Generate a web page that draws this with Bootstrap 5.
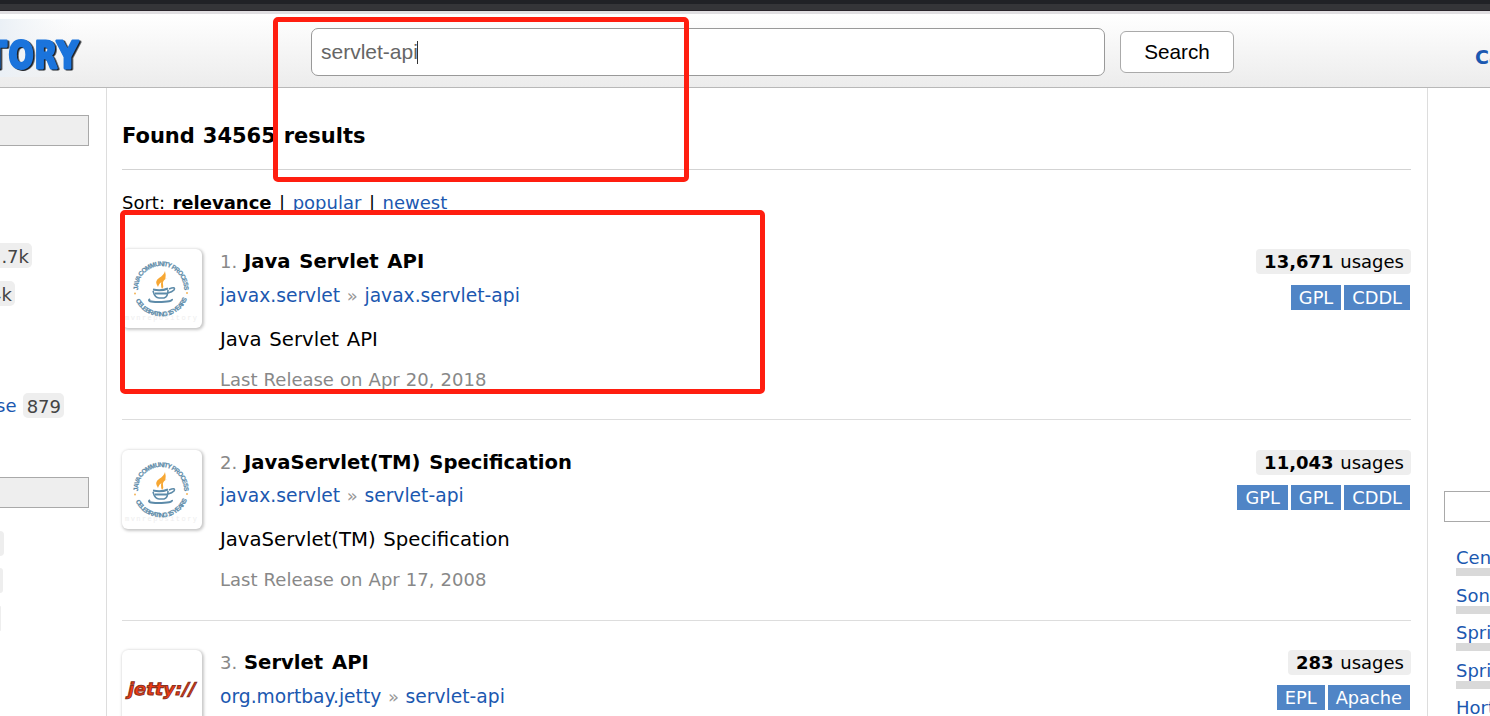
<!DOCTYPE html>
<html lang="en">
<head>
<meta charset="utf-8">
<meta name="viewport" content="width=device-width, initial-scale=1">
<title>servlet-api - search results</title>
<link href="https://cdn.jsdelivr.net/npm/bootstrap@5.3.0/dist/css/bootstrap.min.css" rel="stylesheet">
<style>
body{font-family:Verdana,"DejaVu Sans",sans-serif;font-size:18px;line-height:24px;color:#000;background:#fff;height:716px;overflow:hidden;position:relative}
a{color:#1b58b0;text-decoration:none}
.window-edge{height:14px;background:linear-gradient(#202226 0 4px,#343538 4px 10px,#29242a 10px 11px,#e0dee1 11px 14px)}
.site-header{height:74px;background:linear-gradient(#fff,#ececec);border-bottom:1px solid #b8b8b8}
.logo{width:311px;height:73px;flex:none}
.logo text{filter:drop-shadow(2px 1.5px .6px #1c1f24)}
.query{width:794px;height:48px;margin-top:14px;border:1px solid #999;border-radius:7px;padding:0 9px;background:#fff;font:21px/46px "Liberation Sans",Arial,sans-serif;color:#666;flex:none}
.caret{width:1px;height:23px;background:#333;margin-left:-1px}
.go{width:114px;height:42px;margin:17px 0 0 15px;border:1px solid #aaa;border-radius:6px;padding:0;background:#fff;font:20.7px/40px "Liberation Sans",Arial,sans-serif;color:#000;flex:none}
.cat{margin:31px 0 0 241px;font-weight:700;font-size:19px}
.page-cols{height:628px;overflow:hidden}
.side-l{width:107px;border-right:1px solid #ddd;flex:none;overflow:hidden}
.side-m{width:1321px;padding:0 16px 0 15px;border-right:1px solid #ddd;flex:none}
.side-r{width:62px;flex:none;overflow:hidden;white-space:nowrap}
.bar-box{width:89px;height:31px;background:#eee;border:1px solid #a9a9a9;border-left:0}
.pill{height:25px;line-height:27px;background:#eee;border-radius:5px;color:#444;padding:0 3px;display:block;direction:rtl;overflow:hidden;white-space:nowrap}
.pill-l{border-radius:0 5px 5px 0;padding-left:0}
.pill-empty{padding:0}
h1{font-size:21px;font-weight:700;line-height:26px;margin:0;padding-top:35px;height:81px;word-spacing:.6px}
.results-rule{border-top:1px solid #d3d3d3;height:51px;padding-top:21px;word-spacing:1.8px}
.hit{height:201px;padding-top:30px;border-bottom:1px solid #ddd}
.hit-first{height:200px;padding-top:29px}
.hit-third{padding-top:29px}
.thumb{width:80px;height:79px;border-radius:6px;box-shadow:1px 1px 3px 1px rgba(0,0,0,.22);background:#fff;flex:none}
.hit-body{margin-left:18px;white-space:nowrap}
.hit-title{font-size:19.6px;font-weight:700;line-height:26px;word-spacing:2px}
.num{color:#888;font-weight:400;font-size:18px;word-spacing:0;margin-right:-2px}
.coord{font-size:18.7px;line-height:26px;margin-top:7px;word-spacing:.7px}
.hit-first .coord,.hit-third .coord{margin-top:8px}
.coord span{color:#999;font-size:18px}
.desc{font-size:19.7px;line-height:26px;margin-top:18px;word-spacing:1.5px}
.rel{color:#888;line-height:24px;margin-top:15px;word-spacing:.4px}
.usage{height:25px;line-height:26px;background:#eee;border-radius:4px;padding:0 7px 0 8px;word-spacing:1px}
.lics{gap:3px;margin:10px 1px 0 0}
.lic{height:25px;line-height:26px;background:#5085c6;color:#fff;padding:0 8px;font-size:17.8px}
.meter{height:8px;background:#d9d9d9;margin-left:12px}
.repo{height:29.5px;line-height:24px;padding:7.5px 0 0 12px}
.repo-top{height:23px;line-height:26px;padding-top:0}
.callout-box{position:absolute;border:5px solid #ff1e10;border-radius:5px}
</style>
<script src="https://cdn.jsdelivr.net/npm/bootstrap@5.3.0/dist/js/bootstrap.bundle.min.js"></script>
</head>
<body>
<div class="window-edge"></div>
<header class="site-header d-flex overflow-hidden">
  <svg class="logo" viewBox="0 0 311 73">
    <defs><linearGradient id="lg"><stop offset="0" stop-color="#eaf0f6"/><stop offset="1" stop-color="#f4f6f8" stop-opacity="0"/></linearGradient></defs>
    <rect y="5" width="75" height="58" fill="url(#lg)"/>
    <text transform="translate(0 53.500) scale(.8 1)" x="-17 10.500 43 71" font-family="DejaVu Sans,sans-serif" font-weight="700" font-size="37" stroke-width="2.800" stroke-linejoin="round" fill="#1b74dc" stroke="#1b74dc">TORY</text>
  </svg>
  <div class="query d-flex align-items-center"><span>servlet-api</span><i class="caret"></i></div>
  <button class="go">Search</button>
  <a class="cat" href="#">Ca</a>
</header>
<div class="page-cols d-flex">
  <aside class="side-l">
    <div class="bar-box" style="margin-top:27px"></div>
    <span class="pill pill-l" style="width:32px;margin-top:97px"><bdi>.7k</bdi></span>
    <span class="pill pill-l" style="width:15px;margin-top:13px"><bdi>4k</bdi></span>
    <div class="d-flex" style="margin-top:87px"><a href="#" style="width:24px;margin:1px 0 0 -4px">se</a><span class="pill" style="margin-left:3px;width:41px">879</span></div>
    <div class="bar-box" style="margin-top:59px"></div>
    <span class="pill pill-l pill-empty" style="width:4px;margin-top:23px"></span>
    <span class="pill pill-l pill-empty" style="width:3px;margin-top:12px"></span>
    <span class="pill pill-l pill-empty" style="width:1px;margin-top:13px"></span>
  </aside>
  <main class="side-m">
    <h1>Found 34565 results</h1>
    <div class="results-rule">Sort: <b>relevance</b> | <a href="#">popular</a> | <a href="#">newest</a></div>
    <article class="hit hit-first d-flex">
      <svg class="thumb" viewBox="0 0 80 79">
        <path id="arcTop1" d="M16.200 43A23 23 0 1 1 61.800 43" fill="none"/>
        <path id="arcBot1" d="M12.200 47.500A28 28 0 0 0 65.800 47.500" fill="none"/>
        <g font-family="Liberation Sans,Arial,sans-serif" font-weight="700" font-size="6.5" fill="#5d8ba9" stroke="#5d8ba9" stroke-width=".2">
          <text><textPath href="#arcTop1" startOffset="2" textLength="74">JAVA COMMUNITY PROCESS</textPath></text>
          <text><textPath href="#arcBot1" startOffset="4" textLength="65">CELEBRATING 15 YEARS</textPath></text>
        </g>
        <circle cx="13" cy="44.500" r="1" fill="#f5b65c"/><circle cx="65" cy="44" r="1" fill="#f5b65c"/>
        <path d="M43 22Q42 26 37 29T36 38Q37 34 41 32T43 22M45 29Q39 31 39 35T40 40Q42 38 41 35T45 29" fill="#f7a733"/>
        <g fill="none" stroke="#5d8ba9"><path d="M31 40.500Q39 42.500 46 39.500" stroke-width="2"/><path d="M31 42Q33 49 37 49H42Q46 48 46 41M47 40Q54 37 52 41Q50 43 46 44" stroke-width="1.600"/><path d="M33 44.500H45" stroke-width="2"/><path d="M28 50Q24 53 36 53Q51 53 50 50" stroke-width="2"/></g>
        <text x="3" y="71" font-family="Liberation Mono,monospace" font-size="7" textLength="72" fill="#eee">mvnrepository</text>
      </svg>
      <div class="hit-body">
        <div class="hit-title"><span class="num">1.</span> Java Servlet API</div>
        <div class="coord"><a href="#">javax.servlet</a> <span>»</span> <a href="#">javax.servlet-api</a></div>
        <div class="desc">Java Servlet API</div>
        <div class="rel">Last Release on Apr 20, 2018</div>
      </div>
      <div class="ms-auto d-flex flex-column align-items-end">
        <div class="usage"><b>13,671</b> usages</div>
        <div class="lics d-flex" style="margin-top:11px"><span class="lic">GPL</span><span class="lic">CDDL</span></div>
      </div>
    </article>
    <article class="hit d-flex">
      <svg class="thumb" viewBox="0 0 80 79">
        <path id="arcTop2" d="M16.200 43A23 23 0 1 1 61.800 43" fill="none"/>
        <path id="arcBot2" d="M12.200 47.500A28 28 0 0 0 65.800 47.500" fill="none"/>
        <g font-family="Liberation Sans,Arial,sans-serif" font-weight="700" font-size="6.5" fill="#5d8ba9" stroke="#5d8ba9" stroke-width=".2">
          <text><textPath href="#arcTop2" startOffset="2" textLength="74">JAVA COMMUNITY PROCESS</textPath></text>
          <text><textPath href="#arcBot2" startOffset="4" textLength="65">CELEBRATING 15 YEARS</textPath></text>
        </g>
        <circle cx="13" cy="44.500" r="1" fill="#f5b65c"/><circle cx="65" cy="44" r="1" fill="#f5b65c"/>
        <path d="M43 22Q42 26 37 29T36 38Q37 34 41 32T43 22M45 29Q39 31 39 35T40 40Q42 38 41 35T45 29" fill="#f7a733"/>
        <g fill="none" stroke="#5d8ba9"><path d="M31 40.500Q39 42.500 46 39.500" stroke-width="2"/><path d="M31 42Q33 49 37 49H42Q46 48 46 41M47 40Q54 37 52 41Q50 43 46 44" stroke-width="1.600"/><path d="M33 44.500H45" stroke-width="2"/><path d="M28 50Q24 53 36 53Q51 53 50 50" stroke-width="2"/></g>
        <text x="3" y="71" font-family="Liberation Mono,monospace" font-size="7" textLength="72" fill="#eee">mvnrepository</text>
      </svg>
      <div class="hit-body">
        <div class="hit-title"><span class="num">2.</span> JavaServlet(TM) Specification</div>
        <div class="coord"><a href="#">javax.servlet</a> <span>»</span> <a href="#">servlet-api</a></div>
        <div class="desc">JavaServlet(TM) Specification</div>
        <div class="rel">Last Release on Apr 17, 2008</div>
      </div>
      <div class="ms-auto d-flex flex-column align-items-end">
        <div class="usage"><b>11,043</b> usages</div>
        <div class="lics d-flex"><span class="lic">GPL</span><span class="lic">GPL</span><span class="lic">CDDL</span></div>
      </div>
    </article>
    <article class="hit hit-third d-flex">
      <svg class="thumb" viewBox="0 0 80 79"><text transform="translate(5 45) skewX(-12)" font-family="DejaVu Sans,sans-serif" font-weight="700" font-size="17.500" textLength="67" lengthAdjust="spacingAndGlyphs" fill="#f23a10" stroke="#8a3020" stroke-width="1">jetty://</text></svg>
      <div class="hit-body">
        <div class="hit-title"><span class="num">3.</span> Servlet API</div>
        <div class="coord"><a href="#">org.mortbay.jetty</a> <span>»</span> <a href="#">servlet-api</a></div>
      </div>
      <div class="ms-auto d-flex flex-column align-items-end">
        <div class="usage"><b>283</b> usages</div>
        <div class="lics d-flex"><span class="lic">EPL</span><span class="lic">Apache</span></div>
      </div>
    </article>
  </main>
  <aside class="side-r ps-3">
    <div class="bar-box bg-white" style="margin-top:403px;border-left:1px solid #a9a9a9"></div>
    <div style="padding-top:23px">
      <a class="repo repo-top d-block" href="#">Cen</a><div class="meter"></div>
      <a class="repo d-block" href="#">Son</a><div class="meter"></div>
      <a class="repo d-block" href="#">Spri</a><div class="meter"></div>
      <a class="repo d-block" href="#">Spri</a><div class="meter"></div>
      <a class="repo d-block" href="#">Hort</a>
    </div>
  </aside>
</div>
<div class="callout-box" style="left:273px;top:17px;width:416px;height:165px"></div>
<div class="callout-box" style="left:120px;top:210px;width:645px;height:184px"></div>
</body>
</html>
